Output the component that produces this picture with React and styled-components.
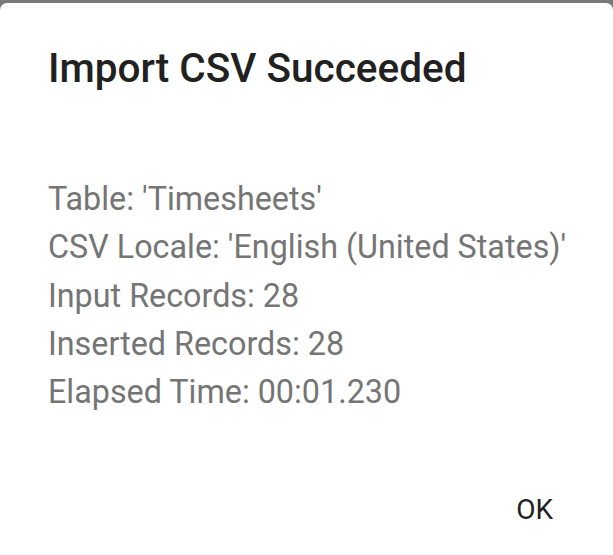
import React from 'react'
import styled, { createGlobalStyle } from 'styled-components'

const GlobalStyle = createGlobalStyle`
  html, body {
    margin: 0;
    padding: 0;
    background: #7a7a7a;
    font-family: Roboto, "Noto Sans", sans-serif;
  }
`;

const Dialog = styled.div`
  margin-top: 3px;
  height: 552px;
  background: #ffffff;
  border-radius: 7px 7px 0 0;
  display: flex;
  flex-direction: column;
  box-sizing: border-box;
  padding: 41px 0 0 48px;
`;

const Title = styled.h1`
  margin: 0;
  font-size: 40.5px;
  line-height: 48px;
  font-weight: 500;
  color: #212121;
`;

const Body = styled.div`
  margin-top: 83px;
  display: flex;
  flex-direction: column;
`;

const Line = styled.div`
  font-size: 32.3px;
  line-height: 48.25px;
  color: #757575;
`;

const Actions = styled.div`
  margin-top: auto;
  display: flex;
  justify-content: flex-end;
  padding: 0 60px 25px 0;
`;

const Button = styled.div`
  font-size: 28px;
  line-height: 40px;
  color: #212121;
  cursor: pointer;
`;

const lines = [
  "Table: 'Timesheets'",
  "CSV Locale: 'English (United States)'",
  'Input Records: 28',
  'Inserted Records: 28',
  'Elapsed Time: 00:01.230',
]

const App = () => {
  return (
    <>
      <GlobalStyle />
      <Dialog>
        <Title>Import CSV Succeeded</Title>
        <Body>
          {lines.map((l) => (
            <Line key={l}>{l}</Line>
          ))}
        </Body>
        <Actions>
          <Button>OK</Button>
        </Actions>
      </Dialog>
    </>
  )
}

export default App
